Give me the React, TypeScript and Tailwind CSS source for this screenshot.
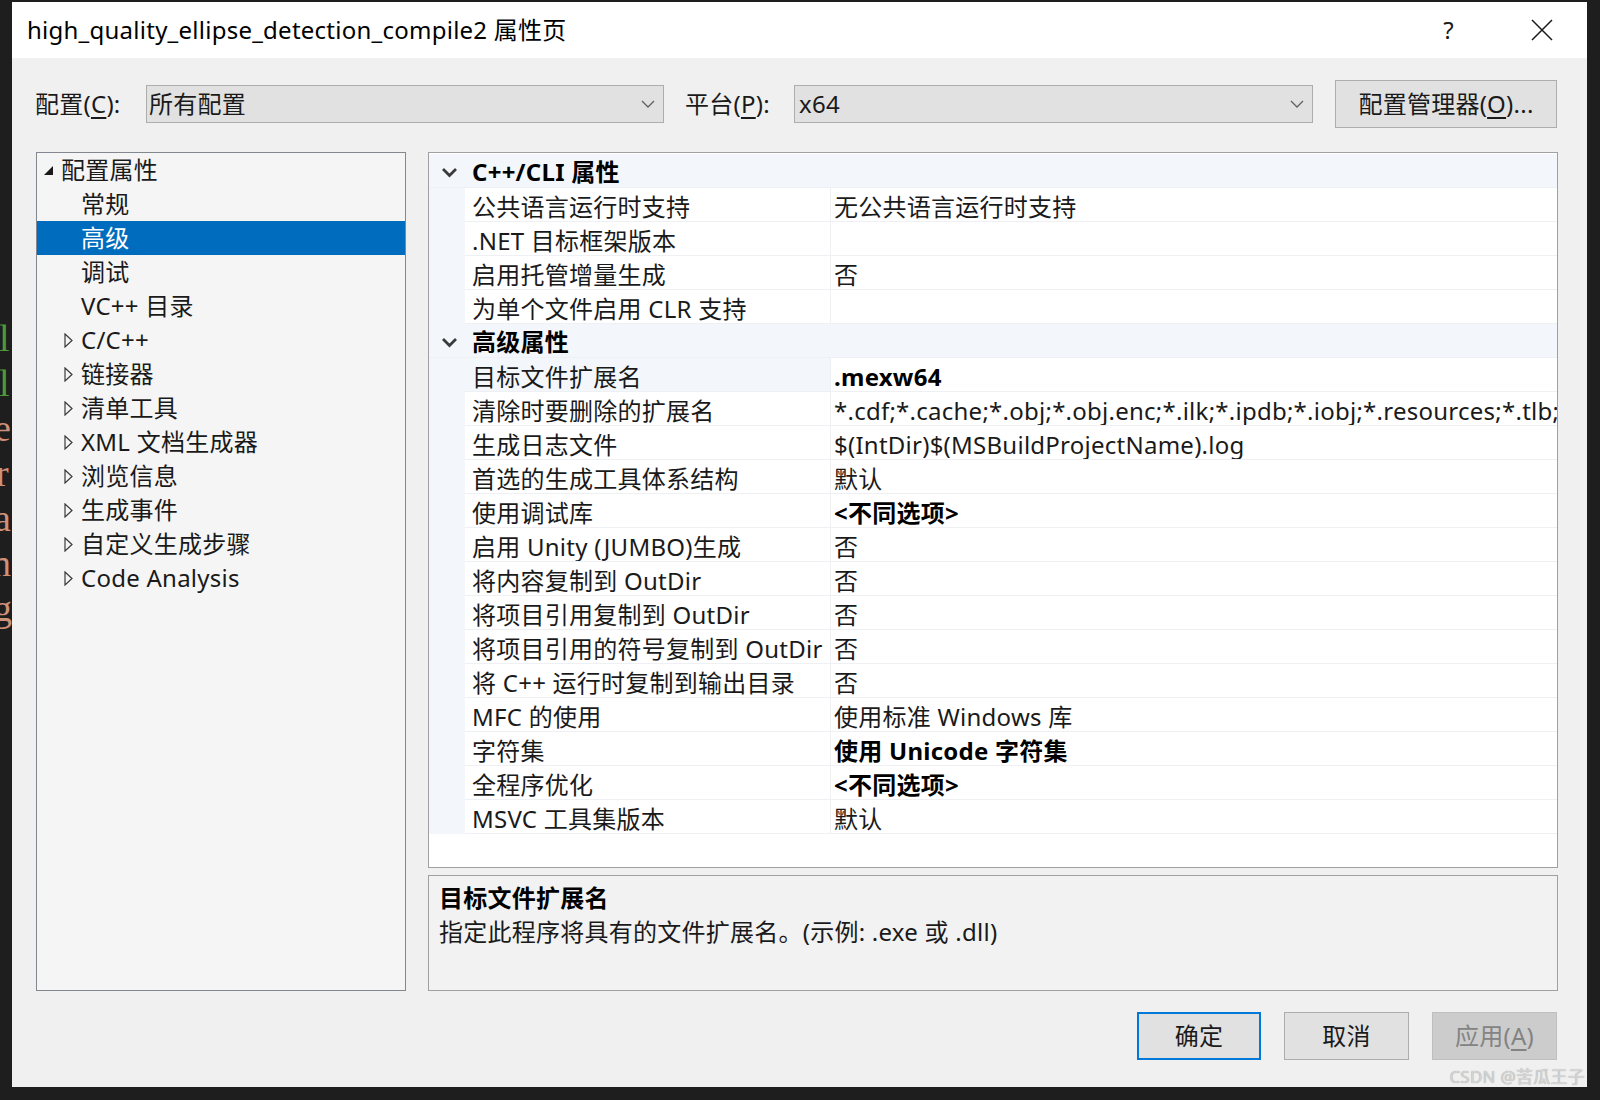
import React from "react"

const font = "font-['Noto_Sans','Noto_Sans_CJK_SC',sans-serif]"

type Row =
  | { kind: "cat"; label: string }
  | { kind: "prop"; name: string; value?: string; bold?: boolean; selected?: boolean }

const rows: Row[] = [
  { kind: "cat", label: "C++/CLI 属性" },
  { kind: "prop", name: "公共语言运行时支持", value: "无公共语言运行时支持" },
  { kind: "prop", name: ".NET 目标框架版本" },
  { kind: "prop", name: "启用托管增量生成", value: "否" },
  { kind: "prop", name: "为单个文件启用 CLR 支持" },
  { kind: "cat", label: "高级属性" },
  { kind: "prop", name: "目标文件扩展名", value: ".mexw64", bold: true, selected: true },
  { kind: "prop", name: "清除时要删除的扩展名", value: "*.cdf;*.cache;*.obj;*.obj.enc;*.ilk;*.ipdb;*.iobj;*.resources;*.tlb;*.tli;*.tlh;*.tmp;*.rsp;*.pgc;*.pgd;*.meta" },
  { kind: "prop", name: "生成日志文件", value: "$(IntDir)$(MSBuildProjectName).log" },
  { kind: "prop", name: "首选的生成工具体系结构", value: "默认" },
  { kind: "prop", name: "使用调试库", value: "<不同选项>", bold: true },
  { kind: "prop", name: "启用 Unity (JUMBO)生成", value: "否" },
  { kind: "prop", name: "将内容复制到 OutDir", value: "否" },
  { kind: "prop", name: "将项目引用复制到 OutDir", value: "否" },
  { kind: "prop", name: "将项目引用的符号复制到 OutDir", value: "否" },
  { kind: "prop", name: "将 C++ 运行时复制到输出目录", value: "否" },
  { kind: "prop", name: "MFC 的使用", value: "使用标准 Windows 库" },
  { kind: "prop", name: "字符集", value: "使用 Unicode 字符集", bold: true },
  { kind: "prop", name: "全程序优化", value: "<不同选项>", bold: true },
  { kind: "prop", name: "MSVC 工具集版本", value: "默认" },
]

const treeItems: { label: string; level: 0 | 1; expander?: "open" | "closed"; selected?: boolean }[] = [
  { label: "配置属性", level: 0, expander: "open" },
  { label: "常规", level: 1 },
  { label: "高级", level: 1, selected: true },
  { label: "调试", level: 1 },
  { label: "VC++ 目录", level: 1 },
  { label: "C/C++", level: 1, expander: "closed" },
  { label: "链接器", level: 1, expander: "closed" },
  { label: "清单工具", level: 1, expander: "closed" },
  { label: "XML 文档生成器", level: 1, expander: "closed" },
  { label: "浏览信息", level: 1, expander: "closed" },
  { label: "生成事件", level: 1, expander: "closed" },
  { label: "自定义生成步骤", level: 1, expander: "closed" },
  { label: "Code Analysis", level: 1, expander: "closed" },
]

function ComboArrow() {
  return (
    <svg width="14" height="8" viewBox="0 0 14 8" className="shrink-0">
      <path d="M1 1 L7 7 L13 1" fill="none" stroke="#606060" strokeWidth="1.3" />
    </svg>
  )
}

function Chevron() {
  return (
    <svg width="17" height="11" viewBox="0 0 17 11">
      <path d="M2 2 L8.5 8.5 L15 2" fill="none" stroke="#3a3a3a" strokeWidth="2.8" />
    </svg>
  )
}

function TreeExpander({ state }: { state: "open" | "closed" }) {
  if (state === "open") {
    return (
      <svg width="11" height="11" viewBox="0 0 11 11">
        <path d="M10 1 L10 10 L1 10 Z" fill="#1a1a1a" />
      </svg>
    )
  }
  return (
    <svg width="9" height="15" viewBox="0 0 9 15">
      <path d="M1 1 L8 7.5 L1 14 Z" fill="none" stroke="#3a3a3a" strokeWidth="1.2" />
    </svg>
  )
}

export default function App() {
  return (
    <div className={`${font} tracking-[0.25px] w-[1600px] h-[1100px] bg-[#1e1e1e] flex overflow-hidden`}>
      {/* editor peeking out on the left */}
      <div className="w-[12px] shrink-0 overflow-hidden pt-[316px] flex flex-col font-['Liberation_Serif',serif] text-[38px] leading-[45px] tracking-normal">
        <span className="-ml-[1px] text-[#4e9a3a]">l</span>
        <span className="-ml-[1px] text-[#4e9a3a]">l</span>
        <span className="-ml-[6px] text-[#ce9178]">e</span>
        <span className="-ml-[4px] text-[#ce9178]">r</span>
        <span className="-ml-[6px] text-[#ce9178]">a</span>
        <span className="-ml-[8px] text-[#ce9178]">n</span>
        <span className="-ml-[7px] text-[#ce9178]">g</span>
      </div>

      <div className="mt-[2px] w-[1575px] h-[1085px] shrink-0 bg-[#f0f0f0] flex flex-col relative">
        {/* title bar */}
        <div className="h-[56px] bg-white flex items-center pl-[15px] pr-[34px]">
          <div className="flex-1 text-[24px] text-black">high_quality_ellipse_detection_compile2 属性页</div>
          <div className="text-[24px] text-[#1a1a1a] mr-[77px]">?</div>
          <svg width="22" height="22" viewBox="0 0 22 22">
            <path d="M1 1 L21 21 M21 1 L1 21" stroke="#1a1a1a" strokeWidth="1.5" />
          </svg>
        </div>

        {/* config row */}
        <div className="mt-[22px] h-[48px] flex items-center pl-[23px] text-[24px] text-[#1a1a1a]">
          <span className="w-[111px]">配置(<span className="underline underline-offset-4">C</span>):</span>
          <div className="w-[518px] h-[38px] bg-[#e1e1e1] border border-[#adadad] flex items-center pl-[2px] pr-[8px]">
            <span className="flex-1">所有配置</span>
            <ComboArrow />
          </div>
          <span className="ml-[21px] w-[109px]">平台(<span className="underline underline-offset-4">P</span>):</span>
          <div className="w-[519px] h-[38px] bg-[#e1e1e1] border border-[#adadad] flex items-center pl-[4px] pr-[8px]">
            <span className="flex-1">x64</span>
            <ComboArrow />
          </div>
          <div className="ml-[22px] w-[222px] h-[48px] bg-[#e1e1e1] border border-[#adadad] flex items-center justify-center">
            配置管理器(<span className="underline underline-offset-4">O</span>)...
          </div>
        </div>

        {/* panels */}
        <div className="mt-[24px] h-[839px] flex pl-[24px] pr-[29px] gap-[22px]">
          {/* tree */}
          <div className="w-[370px] shrink-0 bg-[#f5f5f5] border border-[#828790] text-[24px] text-[#1a1a1a]">
            {treeItems.map((it) => (
              <div
                key={it.label}
                className={`h-[34px] flex items-center ${it.selected ? "bg-[#006cbe] text-white" : ""}`}
              >
                {it.level === 0 ? (
                  <>
                    <span className="w-[24px] pl-[6px] flex items-center">
                      {it.expander && <TreeExpander state={it.expander} />}
                    </span>
                    <span>{it.label}</span>
                  </>
                ) : (
                  <>
                    <span className="w-[44px] pl-[27px] flex items-center">
                      {it.expander && <TreeExpander state={it.expander} />}
                    </span>
                    <span>{it.label}</span>
                  </>
                )}
              </div>
            ))}
          </div>

          {/* property grid + description */}
          <div className="flex-1 flex flex-col gap-[7px] min-w-0">
            <div className="h-[716px] bg-white border border-[#a0a0a0] overflow-hidden text-[24px] text-[#1a1a1a] pt-[1px]">
              {rows.map((r, i) =>
                r.kind === "cat" ? (
                  <div key={i} className="h-[34px] bg-[#f3f6fb] flex items-center pt-[3px] border-b border-[#edf0f5]">
                    <span className="w-[43px] pl-[12px] flex items-center">
                      <Chevron />
                    </span>
                    <span className="font-bold text-black">{r.label}</span>
                  </div>
                ) : (
                  <div key={i} className="h-[34px] flex">
                    <div className="w-[36px] shrink-0 bg-[#f3f6fb]" />
                    <div
                      className={`w-[366px] shrink-0 pl-[7px] pt-[4px] flex items-center border-b border-r border-[#eef0f4] whitespace-nowrap overflow-hidden ${
                        r.selected ? "bg-[#f3f6fb]" : ""
                      }`}
                    >
                      {r.name}
                    </div>
                    <div
                      className={`flex-1 min-w-0 pl-[3px] pt-[4px] flex items-center border-b border-[#eef0f4] whitespace-nowrap overflow-hidden ${
                        r.bold ? "font-bold text-black" : ""
                      }`}
                    >
                      {r.value ?? ""}
                    </div>
                  </div>
                )
              )}
            </div>

            <div className="flex-1 bg-[#f2f2f2] border border-[#a0a0a0] pl-[10px] pt-[5px] text-[24px] text-[#1a1a1a] leading-[34px]">
              <div className="font-bold text-black">目标文件扩展名</div>
              <div>指定此程序将具有的文件扩展名。(示例: .exe 或 .dll)</div>
            </div>
          </div>
        </div>

        {/* buttons */}
        <div className="mt-[21px] flex justify-end gap-[23px] pr-[30px] text-[24px]">
          <div className="w-[124px] h-[48px] bg-[#e1e1e1] border-2 border-[#0078d7] flex items-center justify-center text-[#1a1a1a]">
            确定
          </div>
          <div className="w-[125px] h-[48px] bg-[#e1e1e1] border border-[#adadad] flex items-center justify-center text-[#1a1a1a]">
            取消
          </div>
          <div className="w-[125px] h-[48px] bg-[#cccccc] border border-[#bfbfbf] flex items-center justify-center text-[#838383]">
            应用(<span className="underline underline-offset-4">A</span>)
          </div>
        </div>

        {/* watermark */}
        <div className="absolute right-[2px] bottom-[-2px] text-[17px] text-[#d4d4d4] [text-shadow:0_0_1px_#9a9a9a]">
          CSDN @苦瓜王子
        </div>
      </div>

      <div className="flex-1 bg-[#1e1e1e]" />
    </div>
  )
}
